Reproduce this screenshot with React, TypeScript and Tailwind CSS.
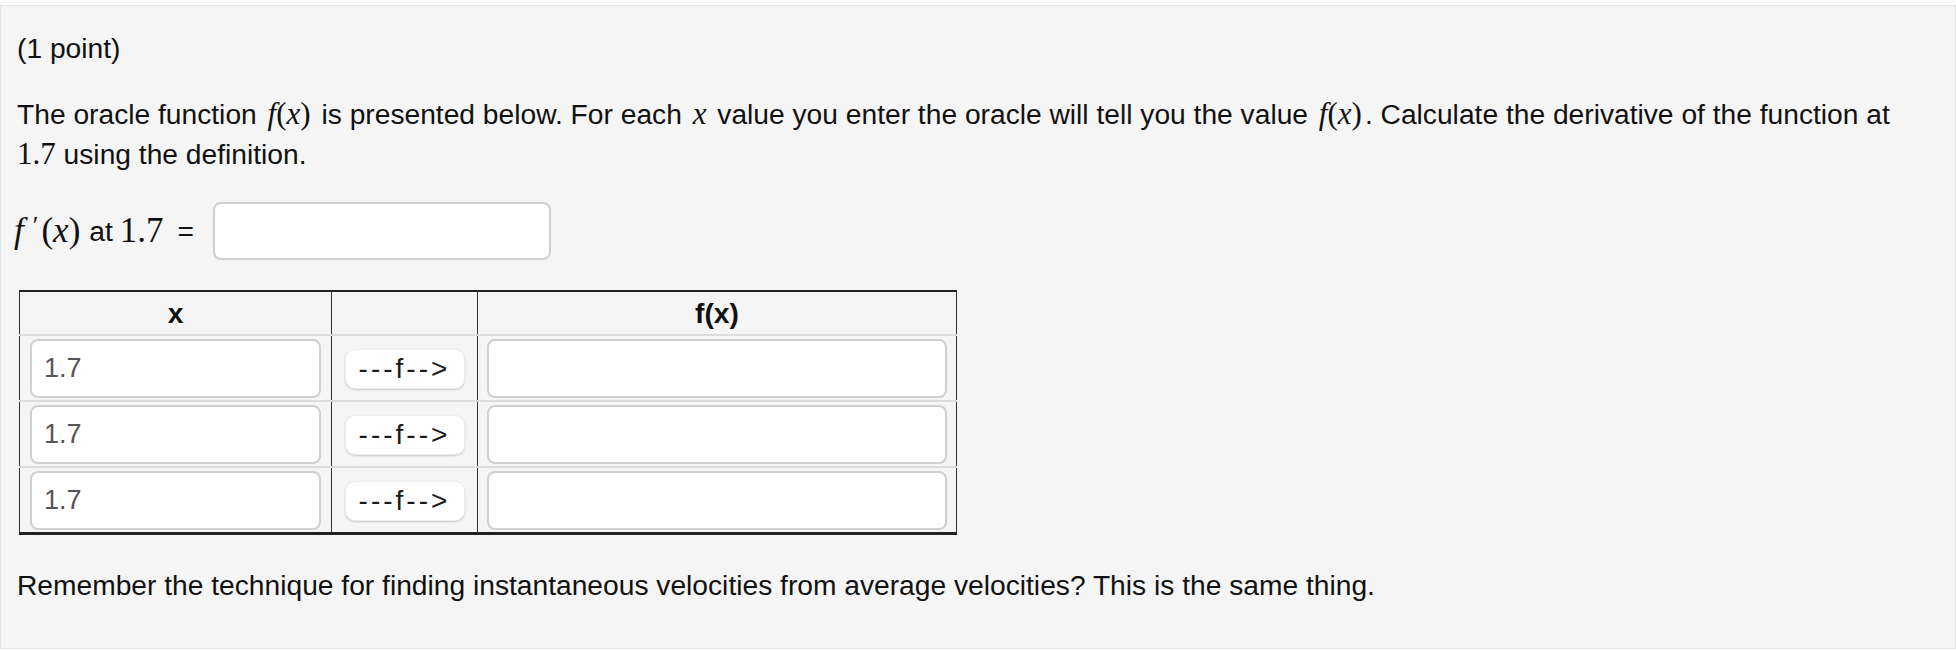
import React from "react";

const sans = { fontFamily: '"Liberation Sans", Arial, sans-serif' };
const serif = { fontFamily: '"Liberation Serif", "Times New Roman", serif' };

// MathJax-like inline math
const Mi = ({ children }: { children: React.ReactNode }) => (
  <span className="italic" style={serif}>
    {children}
  </span>
);
const Mn = ({ children }: { children: React.ReactNode }) => <span style={serif}>{children}</span>;

const Fx = () => (
  <span className="text-[31px] mx-[3px]">
    <Mi>f</Mi>
    <Mn>(</Mn>
    <Mi>x</Mi>
    <Mn>)</Mn>
  </span>
);

const Row = () => (
  <tr className="h-[66px] border-t-2 border-[#dcdcdc]">
    <td className="border-x border-[#333] px-[10px] py-[2px]">
      <input
        defaultValue="1.7"
        className="w-full h-[59px] bg-white border-2 border-[#d0d0d0] rounded-[8px] pl-[12px] text-[27px] text-[#555] outline-none"
        style={sans}
      />
    </td>
    <td className="border-x border-[#333] text-center">
      <button
        className="w-[120px] h-[40px] bg-white rounded-[10px] shadow-[0_1px_2px_rgba(0,0,0,0.18)] border border-[#ececec] text-[28px] tracking-[3px] text-[#1a1a1a] leading-none"
        style={sans}
      >
        ---f--&gt;
      </button>
    </td>
    <td className="border-x border-[#333] px-[9px] py-[2px]">
      <input className="w-full h-[59px] bg-white border-2 border-[#d0d0d0] rounded-[8px] outline-none" />
    </td>
  </tr>
);

export default function App() {
  return (
    <div className="bg-[#fbfbfb] pt-[5px] h-[650px] overflow-hidden" style={sans}>
      <div className="bg-[#f5f5f5] border border-[#e4e4e4] h-[644px] pl-[16px] pt-[22px] text-[28.2px] text-[#111]">
        <p className="leading-[40px]">(1 point)</p>

        <p className="mt-[26px] leading-[39px] whitespace-nowrap">
          The oracle function <Fx /> is presented below. For each{" "}
          <span className="text-[31px] mx-[3px]">
            <Mi>x</Mi>
          </span>{" "}
          value you enter the oracle will tell you the value <Fx />. Calculate the derivative of the function at
          <br />
          <span className="text-[31px]">
            <Mn>1.7</Mn>
          </span>{" "}
          using the definition.
        </p>

        <div className="mt-[28px] flex items-center h-[58px]">
          <span className="text-[35px] -ml-[3px]">
            <Mi>f</Mi>
            <span className="relative -top-[8px] ml-[9px] mr-[3px] text-[26px]" style={serif}>
              ′
            </span>
            <Mn>(</Mn>
            <Mi>x</Mi>
            <Mn>)</Mn>
          </span>
          <span className="ml-[9px]">at</span>
          <span className="text-[35px] ml-[7px]">
            <Mn>1.7</Mn>
          </span>
          <span className="ml-[14px]">=</span>
          <input className="ml-[19px] w-[338px] h-[58px] bg-white border-2 border-[#d0d0d0] rounded-[8px] outline-none" />
        </div>

        <table className="mt-[30px] ml-[2px] w-[937px] border-collapse table-fixed border-t-2 border-b-[3px] border-[#222]">
          <colgroup>
            <col className="w-[312px]" />
            <col className="w-[146px]" />
            <col className="w-[479px]" />
          </colgroup>
          <thead>
            <tr className="h-[44px]">
              <th className="border-x border-[#333] font-bold text-center">x</th>
              <th className="border-x border-[#333]"></th>
              <th className="border-x border-[#333] font-bold text-center">f(x)</th>
            </tr>
          </thead>
          <tbody>
            <Row />
            <Row />
            <Row />
          </tbody>
        </table>

        <p className="mt-[30px] leading-[40px]">
          Remember the technique for finding instantaneous velocities from average velocities? This is the same thing.
        </p>
      </div>
    </div>
  );
}
